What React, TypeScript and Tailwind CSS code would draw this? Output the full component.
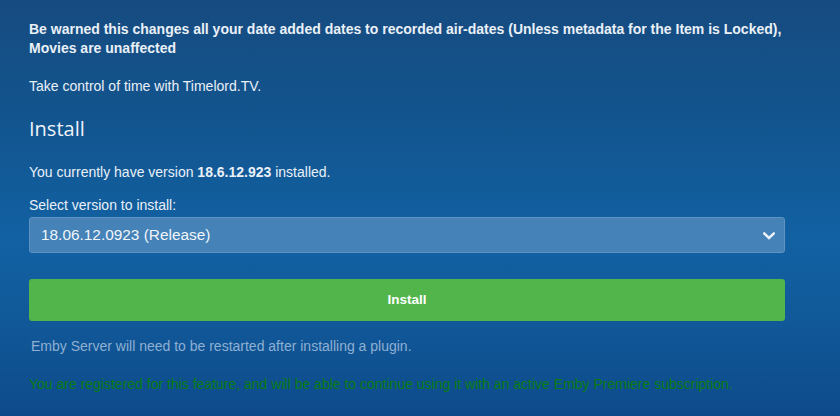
export default function App() {
  return (
    <div className="w-[840px] h-[416px] overflow-hidden bg-[linear-gradient(180deg,#164b80_0%,#12558f_30%,#1261a3_57%,#115a9a_75%,#0e4a8b_100%)] font-['Liberation_Sans',Arial,sans-serif] text-[14px] text-[#eaf0f7]">
      <div className="w-[756px] ml-[29px] pt-[20px]">
        {/* warning */}
        <p className="font-bold leading-[19px]">
          Be warned this changes all your date added dates to recorded air-dates (Unless metadata for the Item is Locked),
          <br />
          Movies are unaffected
        </p>

        <p className="mt-[19px] leading-[19px]">Take control of time with Timelord.TV.</p>

        {/* install section */}
        <h2 className="mt-[20px] font-['Open_Sans',sans-serif] text-[20px] font-normal leading-[26px] text-[#eef3f9]">
          Install
        </h2>

        <p className="mt-[21px] leading-[19px]">
          You currently have version <span className="font-bold">18.6.12.923</span> installed.
        </p>

        <label className="block mt-[14px] leading-[19px]">Select version to install:</label>

        <div className="mt-[2px] flex items-center justify-between h-[36px] rounded-[3px] border border-[#5f93c2] bg-[#4482b8] pl-[11px] pr-[9px] text-[15.4px] text-[#f1f5fa]">
          <span>18.06.12.0923 (Release)</span>
          <svg width="12" height="8" viewBox="0 0 12 8" fill="none" className="mt-[1px]">
            <path d="M1.2 1.5 L6 6 L10.8 1.5" stroke="#eef3f9" strokeWidth="2.4" strokeLinecap="square" />
          </svg>
        </div>

        <button className="mt-[26px] w-full h-[42px] rounded-[3px] bg-[#52b54b] text-[13.5px] font-bold text-white">
          Install
        </button>

        <p className="mt-[16px] pl-[2px] leading-[19px] text-[#8eb0d3]">
          Emby Server will need to be restarted after installing a plugin.
        </p>

        <p className="mt-[19px] leading-[19px] text-[#0a7d12]">
          You are registered for this feature, and will be able to continue using it with an active Emby Premiere subscription.
        </p>
      </div>
    </div>
  );
}
